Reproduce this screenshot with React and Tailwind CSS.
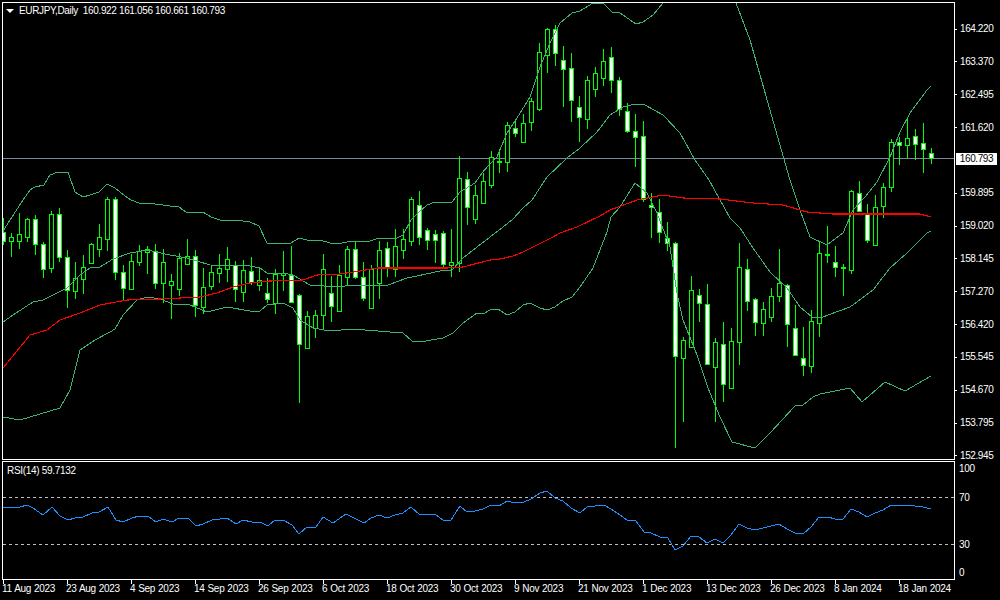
const FONT = { fontFamily: '"Liberation Sans", Arial, sans-serif' };

// one row per candle, left to right: high, body top, body bottom, low, 1 = down candle (white)
const candles = [
  [218,232,241,245,1],[233,237,241,257,0],[213,234,241,249,0],[218,219,237,242,0],[215,219,244,255,1],
  [242,244,269,278,1],[211,214,268,273,0],[208,214,257,262,1],[250,257,290,308,1],[262,278,291,299,0],
  [255,267,279,294,0],[243,244,263,263,0],[224,237,249,257,0],[197,199,239,251,0],[197,199,272,280,1],
  [265,272,288,301,1],[254,261,289,290,0],[245,251,262,266,0],[246,249,252,274,0],[244,251,283,289,1],
  [249,262,283,303,0],[274,281,285,319,0],[253,258,289,296,0],[239,256,264,265,0],[250,256,305,317,1],
  [268,287,307,314,0],[265,272,286,290,0],[254,268,273,283,0],[247,259,269,282,0],[261,265,289,302,1],
  [260,270,292,302,0],[257,271,282,285,1],[268,280,285,291,0],[278,293,299,303,1],[269,274,303,314,0],
  [251,273,275,291,0],[246,275,302,303,1],[294,295,344,403,1],[311,316,348,348,0],[310,315,328,338,0],
  [254,269,315,329,0],[276,293,306,322,1],[265,275,311,312,0],[246,249,277,286,0],[242,249,277,279,1],
  [262,277,298,301,1],[265,269,308,308,0],[241,250,283,299,0],[242,248,267,277,1],[229,246,269,277,0],
  [229,239,250,259,0],[197,199,241,246,0],[191,205,237,245,1],[228,230,240,250,1],[230,234,240,263,1],
  [231,233,264,268,1],[229,262,265,277,0],[156,178,263,272,0],[172,179,207,225,1],[185,195,219,224,0],
  [173,181,203,204,0],[151,157,185,188,0],[149,161,162,173,0],[122,125,162,172,0],[121,128,133,137,1],
  [114,123,142,143,0],[98,101,122,131,0],[43,52,109,111,0],[28,29,55,73,0],[25,29,53,66,1],
  [46,60,69,107,1],[53,68,100,122,1],[96,107,117,142,1],[76,80,119,129,0],[67,73,89,97,0],
  [49,61,78,86,0],[47,57,80,93,1],[77,80,109,116,1],[103,111,131,133,1],[114,131,137,167,1],
  [121,136,199,202,1],[193,205,207,238,1],[199,212,232,243,1],[222,238,243,251,1],[242,243,356,448,1],
  [337,340,358,422,0],[276,290,347,347,0],[289,295,303,322,1],[284,304,364,364,1],[338,342,367,422,0],
  [322,344,384,402,1],[328,341,388,388,0],[243,267,342,365,0],[259,269,301,311,1],[298,299,322,336,1],
  [302,309,323,336,0],[288,296,317,322,0],[249,283,296,302,0],[284,285,324,347,1],[305,328,355,355,1],
  [327,358,365,376,1],[310,321,366,373,0],[242,253,323,337,0],[226,254,255,263,0],[246,262,267,277,1],
  [264,267,268,296,0],[190,191,270,274,0],[181,193,211,212,1],[204,213,240,243,1],[195,207,245,246,0],
  [183,187,206,218,0],[139,142,187,192,0],[137,142,145,165,1],[118,138,145,158,0],[129,136,144,160,1],
  [123,143,149,173,1],[148,153,158,164,1],
];

const upperBand = "3,231 12,217 23,200 30,190 35,187 44,185 50,175 58,172 68,172 75,192 83,197 90,195 99,192 107,184 115,188 125,196 131,200 139,203 147,203 155,204 170,206 179,207 187,213 203,212 211,217 220,220 235,220 250,222 259,226 267,243 291,243 299,238 307,240 323,241 334,244 342,243 347,242 363,241 370,241 379,238 387,238 395,239 403,235 411,220 419,212 427,205 435,202 452,202 460,192 475,183 482,173 489,165 497,157 507,133 517,118 530,97 540,67 550,43 560,23 572,13 580,11 593,3 603,3 612,12 620,13 636,24 643,22 653,15 663,3 670,-4 730,-4 736,3 750,40 770,110 790,180 800,210 810,237 827,245 843,233 853,210 865,197 877,182 890,157 900,132 910,113 927,90 931,86";
const middleBand = "3,322 13,315 33,302 43,300 53,295 67,288 80,275 90,268 100,267 113,259 130,253 147,250 170,255 187,258 210,265 250,266 260,268 267,273 283,273 293,275 310,285 337,287 353,285 388,285 407,278 417,276 440,271 452,270 463,258 477,247 490,237 503,227 513,219 523,208 532,200 547,177 567,158 580,148 597,132 610,115 623,107 635,104 645,105 663,115 680,133 695,160 709,180 730,218 740,228 753,248 770,272 787,288 800,307 812,317 820,318 850,307 873,290 890,268 907,253 927,233 931,231";
const lowerBand = "3,417 20,420 40,414 60,408 70,390 80,350 95,340 110,332 115,329 123,315 137,300 147,297 160,299 173,304 190,305 207,312 227,307 250,311 260,311 267,305 283,303 293,308 300,320 313,328 330,331 353,329 390,332 403,333 412,341 420,342 443,338 453,333 463,323 477,313 483,314 490,310 498,309 507,315 515,312 523,305 530,303 540,308 547,310 555,307 563,301 572,297 580,287 593,268 600,250 607,232 611,217 620,207 635,183 647,193 657,213 670,247 677,293 683,320 697,355 708,388 720,417 732,442 755,448 770,433 795,406 803,405 813,397 820,394 850,388 862,402 885,382 905,391 931,376";
const movingAvg = "3,368 30,335 47,330 60,320 80,313 100,305 127,300 160,299 200,297 217,293 233,287 250,283 270,281 303,280 317,275 340,274 360,271 377,268 447,268 463,267 490,260 500,259 513,256 523,252 533,247 553,237 560,233 577,227 600,216 610,210 637,200 663,195 683,198 720,199 753,203 783,205 807,212 833,214 920,214 931,217";
const rsiLine = "3,507 20,507 27,505 33,508 43,515 52,507 60,516 68,520 75,518 83,517 92,513 99,512 108,507 116,520 123,522 132,518 139,516 148,516 156,522 163,519 172,522 179,518 188,518 196,526 203,524 212,520 220,519 227,518 236,524 243,520 252,522 260,522 268,526 275,520 283,520 292,525 299,534 307,527 316,527 323,517 333,523 346,514 364,523 371,518 379,515 387,518 395,515 403,513 411,507 420,515 435,514 444,521 451,520 460,506 467,512 475,511 483,509 491,505 499,506 507,501 515,503 524,502 531,499 540,493 547,491 555,498 563,501 571,508 580,513 587,507 595,506 604,505 611,509 620,515 627,520 636,521 644,532 651,533 660,537 668,538 675,550 683,546 691,536 699,537 707,543 715,539 723,543 731,535 739,524 747,528 755,530 763,528 771,526 779,524 787,529 795,533 803,534 811,527 819,517 828,517 835,519 843,519 851,509 859,512 867,517 875,513 883,510 891,505 899,506 907,505 915,506 923,507 931,509";

const prices = ["164.220","163.370","162.495","161.620","160.793","159.895","159.020","158.145","157.270","156.420","155.545","154.670","153.795","152.945"];
const dates = ["11 Aug 2023","23 Aug 2023","4 Sep 2023","14 Sep 2023","26 Sep 2023","6 Oct 2023","18 Oct 2023","30 Oct 2023","9 Nov 2023","21 Nov 2023","1 Dec 2023","13 Dec 2023","26 Dec 2023","8 Jan 2024","18 Jan 2024"];

function PriceChart() {
  return (
    <svg viewBox="3 3 951 456" shapeRendering="crispEdges" className="block h-[456px] w-[951px]">
      <line x1="3" x2="954" y1="158.5" y2="158.5" stroke="#778899" />
      {candles.map(([high, top, bottom, low, down], i) => {
        const x = 3 + 8 * i;
        return (
          <g key={i}>
            <rect x={x} y={high} width="1" height={low - high} fill="#00ff00" />
            {bottom - top < 2 ? (
              <rect x={x - 2} y={top} width="5" height={bottom - top + 1} fill="#00ff00" />
            ) : (
              <rect
                x={x - 1.5}
                y={top + 0.5}
                width="4"
                height={bottom - top}
                fill={down ? "#ffffff" : "#000000"}
                stroke="#00ff00"
              />
            )}
          </g>
        );
      })}
      <polyline points={upperBand} fill="none" stroke="#3cb371" />
      <polyline points={middleBand} fill="none" stroke="#3cb371" />
      <polyline points={lowerBand} fill="none" stroke="#3cb371" />
      <polyline points={movingAvg} fill="none" stroke="#ff0000" strokeWidth="1.1" />
    </svg>
  );
}

function RsiChart() {
  return (
    <svg viewBox="3 462 951 117" shapeRendering="crispEdges" className="block h-[117px] w-[951px]">
      <line x1="3" x2="954" y1="497.5" y2="497.5" stroke="#c0c0c0" strokeDasharray="3 3" />
      <line x1="3" x2="954" y1="544.5" y2="544.5" stroke="#c0c0c0" strokeDasharray="3 3" />
      <polyline points={rsiLine} fill="none" stroke="#1e90ff" />
    </svg>
  );
}

export default function App() {
  return (
    <div style={FONT} className="flex h-[600px] w-[1000px] flex-col overflow-hidden bg-black pl-[2px] pt-[2px] text-[10px] leading-none tracking-[-0.3px] text-white">
      <div className="flex h-[458px]">
        <div className="relative w-[953px] border border-white">
          <PriceChart />
          <div className="absolute left-[3px] top-[3px] flex items-center gap-[5px]">
            <span className="h-0 w-0 border-x-[4px] border-t-[4px] border-x-transparent border-t-white" />
            <span className="whitespace-pre tracking-[-0.35px]">EURJPY,Daily  160.922 161.056 160.661 160.793</span>
          </div>
        </div>
        <div className="flex flex-col pt-[10.6px] tracking-[-0.4px]">
          {prices.map((p) =>
            p === "160.793" ? (
              <div key={p} className="flex h-[32.85px] shrink-0 items-start pl-[1px] pt-[9px]">
                <span className="flex h-[12px] w-[41px] items-center justify-center bg-white text-black">{p}</span>
              </div>
            ) : (
              <div key={p} className="flex h-[32.85px] shrink-0 items-center">
                <span className="mr-[3px] h-px w-[2px] bg-white" />
                <span>{p}</span>
              </div>
            )
          )}
        </div>
      </div>

      <div className="mt-px flex h-[119px]">
        <div className="relative w-[953px] border border-white">
          <RsiChart />
          <span className="absolute left-[4px] top-[4px]">RSI(14) 59.7132</span>
        </div>
        <div className="flex h-full flex-col pl-[4px]">
          <span className="mt-[2px] flex h-[12px] items-center">100</span>
          <span className="mt-[17px] flex h-[12px] items-center">70</span>
          <span className="mt-[35px] flex h-[12px] items-center">30</span>
          <span className="mt-[16px] flex h-[12px] items-center">0</span>
        </div>
      </div>

      <div className="flex [word-spacing:0.5px]">
        {dates.map((d) => (
          <div key={d} className="w-[64px] shrink-0">
            <span className="ml-px block h-[4px] w-px bg-white" />
            <span className="block whitespace-nowrap">{d}</span>
          </div>
        ))}
      </div>
    </div>
  );
}
